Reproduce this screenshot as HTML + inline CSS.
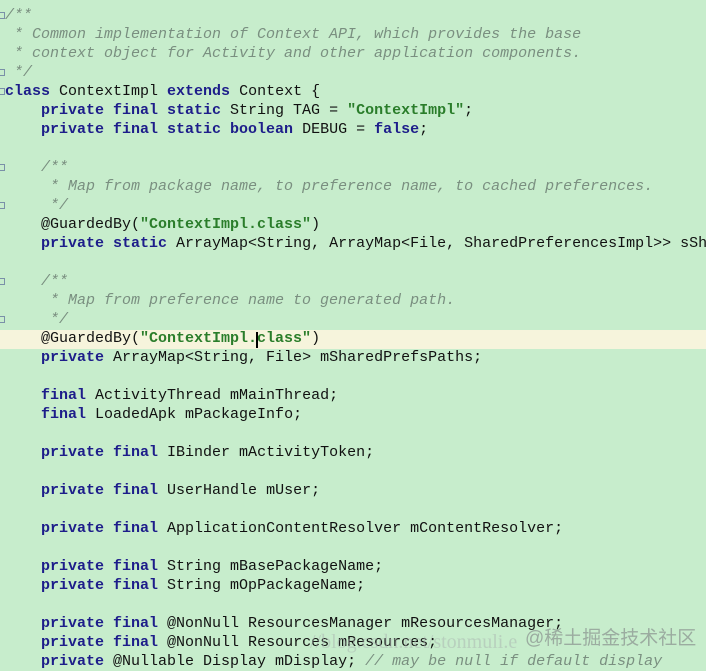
<!DOCTYPE html>
<html><head><style>
body{margin:0;width:706px;height:666px;overflow:hidden;background:#c7edcc;position:relative}
pre{margin:0;position:absolute;left:5px;top:6px;font-family:"Liberation Mono",monospace;font-size:15px;line-height:19px;color:#111;white-space:pre}
.k{color:#1d1d8a;font-weight:bold}
.s{color:#2a7d2a;font-weight:bold}
.c{color:#7a8f80;font-style:italic}
.hl{position:absolute;left:0;top:330px;width:706px;height:19px;background:#f6f4dc}
.f{position:absolute;left:0;width:5px;height:7px;border:1px solid #7a90a8;border-left:none;box-sizing:border-box}
.wm{position:absolute;left:525px;top:623px;font-family:"Liberation Sans","Noto Sans CJK SC",sans-serif;font-size:19px;color:rgba(140,150,145,.75)}
.wm2{position:absolute;left:310px;top:631px;font-family:"Liberation Serif",serif;font-size:20px;color:rgba(170,180,175,.5)}
</style></head><body>
<div class="hl"></div>
<div class="f" style="top:12px"></div><div class="f" style="top:69px"></div><div class="f" style="top:88px"></div>
<div class="f" style="top:164px"></div><div class="f" style="top:202px"></div><div class="f" style="top:278px"></div><div class="f" style="top:316px"></div>
<pre><span class="c">/**
 * Common implementation of Context API, which provides the base
 * context object for Activity and other application components.
 */</span>
<span class="k">class</span> ContextImpl <span class="k">extends</span> Context {
    <span class="k">private final static</span> String TAG = <span class="s">"ContextImpl"</span>;
    <span class="k">private final static boolean</span> DEBUG = <span class="k">false</span>;

    <span class="c">/**
     * Map from package name, to preference name, to cached preferences.
     */</span>
    @GuardedBy(<span class="s">"ContextImpl.class"</span>)
    <span class="k">private static</span> ArrayMap&lt;String, ArrayMap&lt;File, SharedPreferencesImpl&gt;&gt; sSh

    <span class="c">/**
     * Map from preference name to generated path.
     */</span>
    @GuardedBy(<span class="s">"ContextImpl.class"</span>)
    <span class="k">private</span> ArrayMap&lt;String, File&gt; mSharedPrefsPaths;

    <span class="k">final</span> ActivityThread mMainThread;
    <span class="k">final</span> LoadedApk mPackageInfo;

    <span class="k">private final</span> IBinder mActivityToken;

    <span class="k">private final</span> UserHandle mUser;

    <span class="k">private final</span> ApplicationContentResolver mContentResolver;

    <span class="k">private final</span> String mBasePackageName;
    <span class="k">private final</span> String mOpPackageName;

    <span class="k">private final</span> @NonNull ResourcesManager mResourcesManager;
    <span class="k">private final</span> @NonNull Resources mResources;
    <span class="k">private</span> @Nullable Display mDisplay; <span class="c">// may be null if default display</span></pre>
<div style="position:absolute;left:256px;top:332px;width:2px;height:16px;background:#000"></div>
<div class="wm2">//blog.csdn.net/stonmuli.e</div>
<div class="wm">@稀土掘金技术社区</div>
</body></html>
